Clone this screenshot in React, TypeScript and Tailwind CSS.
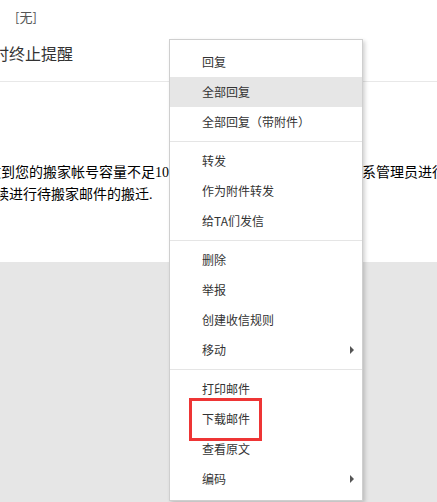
type MenuItem = { label: string; active?: boolean; sub?: boolean };

const groups: MenuItem[][] = [
  [{ label: '回复' }, { label: '全部回复', active: true }, { label: '全部回复（带附件）' }],
  [{ label: '转发' }, { label: '作为附件转发' }, { label: '给TA们发信' }],
  [{ label: '删除' }, { label: '举报' }, { label: '创建收信规则' }, { label: '移动', sub: true }],
  [{ label: '打印邮件' }, { label: '下载邮件' }, { label: '查看原文' }, { label: '编码', sub: true }],
];

function Row({ item }: { item: MenuItem }) {
  return (
    <div
      className={`flex h-[30px] items-center justify-between pl-8 pr-2 ${
        item.active ? 'bg-[#e6e6e6]' : ''
      }`}
    >
      <span>{item.label}</span>
      {item.sub && (
        <span className="h-0 w-0 border-y-[4px] border-l-[4px] border-y-transparent border-l-[#555]" />
      )}
    </div>
  );
}

export default function App() {
  return (
    <div
      className="relative flex h-[502px] w-[437px] flex-col overflow-hidden bg-white"
      style={{ fontFamily: '"Liberation Serif", "Noto Sans CJK SC", sans-serif' }}
    >
      {/* Header */}
      <div className="h-[82px] shrink-0 border-b border-[#e8e8e8] font-['Noto_Sans_CJK_SC',sans-serif]">
        <div className="pl-[15px] pt-[9px] text-[13px] leading-[16px] text-[#555]">[无]</div>
        <div className="ml-[-7px] mt-[16px] whitespace-nowrap text-[16px] leading-[24px] text-[#333]">
          时终止提醒
        </div>
      </div>

      {/* Body */}
      <div className="h-[180px] shrink-0 whitespace-nowrap pt-[80px] text-[14px] leading-[22px] text-black">
        <div className="ml-[-13px] flex">
          <span>收到您的搬家帐号容量不足10</span>
          <span className="w-[193px] shrink-0 overflow-hidden">G，超出部分邮件将无法搬迁，请联</span>
          <span>系管理员进行扩容</span>
        </div>
        <div className="ml-[-5px]">续进行待搬家邮件的搬迁.</div>
      </div>

      <div className="flex-1 bg-[#e6e6e6]" />

      {/* Context menu */}
      <div className="absolute left-[169px] top-[39px] w-[194px] border border-[#cfcfcf] bg-white pb-[6px] pt-[7px] font-['Noto_Sans_CJK_SC',sans-serif] text-[12px] text-[#333] shadow-[2px_2px_4px_rgba(0,0,0,0.18)]">
        {groups.map((g, i) => (
          <div key={i}>
            {i > 0 && <div className="my-[4px] h-px bg-[#e5e5e5]" />}
            {g.map((item) => (
              <Row key={item.label} item={item} />
            ))}
          </div>
        ))}
      </div>

      {/* Annotation */}
      <div className="absolute left-[189px] top-[398px] h-[43px] w-[73px] border-[3px] border-[#ee3535]" />
    </div>
  );
}
